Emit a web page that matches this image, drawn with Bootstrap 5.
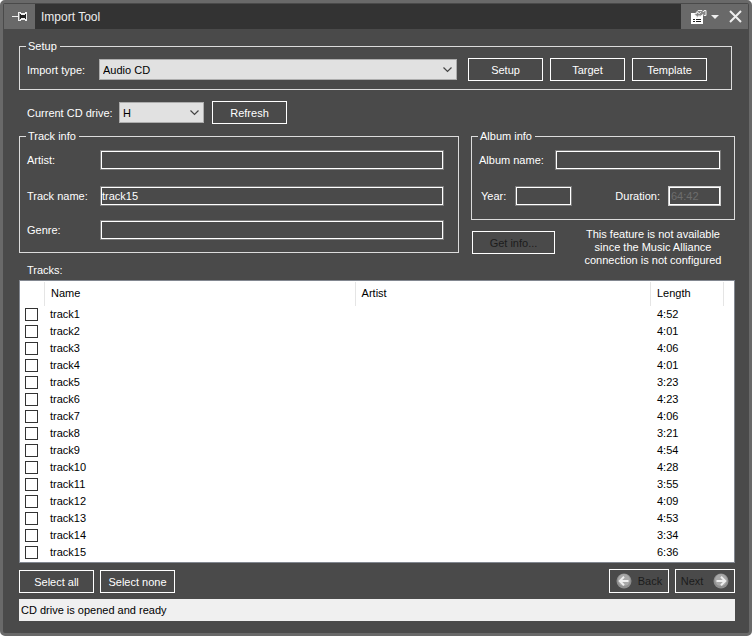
<!DOCTYPE html>
<html lang="en">
<head>
<meta charset="utf-8">
<meta name="viewport" content="width=device-width, initial-scale=1">
<title>Import Tool</title>
<link href="https://cdn.jsdelivr.net/npm/bootstrap@5.3.0/dist/css/bootstrap.min.css" rel="stylesheet">
<style>
  body { background: #fff; font-family: "Liberation Sans", Arial, sans-serif; font-size: 11px; line-height: 14px; }
  .tool-window { background: #4a4a4a; color: #fff; border: 3px solid #696969; border-radius: 5px; }
  .title-bar { height: 25px; margin: 1px 1px 0; background: #333; }
  .title-tools { background: #696969; width: 67px; padding: 0 6px 0 10px; }
  .title-bar button { border: 0; padding: 0; display: flex; justify-content: center; align-items: center; background: #696969; }
  .pin-button { width: 31px; }
  .title-bar h1 { font-size: 12px; line-height: 26px; padding-left: 6px; color: #eee; }
  .tool-body { padding: 11px 14px 12px 16px; }
  fieldset { border: 1px solid #dcdcdc; min-width: 0; }
  fieldset legend { float: none; width: auto; font-size: 11px; line-height: 13px; height: 13px; margin: 0 0 0 -1px; padding: 0 3px 0 2px; }
  .setup-group { margin-right: 3px; padding: 5px 24px 8px 7px; }
  .setup-label { width: 72px; }
  .button-row { gap: 7px; margin-left: 11px; }
  .tool-btn { --bs-btn-color: #fff; --bs-btn-border-color: #fff; --bs-btn-bg: #4a4a4a; --bs-btn-hover-color: #fff; --bs-btn-hover-bg: #5a5a5a; --bs-btn-hover-border-color: #fff;
    --bs-btn-disabled-color: #1c1c1c; --bs-btn-disabled-border-color: #fff; --bs-btn-disabled-bg: #4a4a4a; --bs-btn-disabled-opacity: 1;
    --bs-btn-border-radius: 0; --bs-btn-padding-x: 0; --bs-btn-padding-y: 0; --bs-btn-font-size: 11px; --bs-btn-line-height: 14px; width: 75px; height: 23px; }
  .tool-select { height: 21px; min-height: 0; padding: 0 20px 0 3px; font-size: 11px; line-height: 14px; color: #000; border: 1px solid #adadad; border-radius: 0;
    background-color: #e1e1e1; background-position: right 3px center; background-size: 11px 11px;
    background-image: url("data:image/svg+xml,%3csvg xmlns='http://www.w3.org/2000/svg' viewBox='0 0 11 11'%3e%3cpath fill='none' stroke='%23444' stroke-width='1.2' d='M1.5 3.5l4 4 4-4'/%3e%3c/svg%3e"); }
  .drive-row { margin-top: 11px; padding-left: 8px; }
  .drive-label { width: 92px; }
  .drive-select { width: 85px; }
  .groups { gap: 12px; margin-top: 6px; }
  .track-side { flex: 5 1 0; min-width: 0; }
  .album-side { flex: 3 1 0; min-width: 0; }
  .track-group { padding: 7px 14px 12px 7px; }
  .album-group { padding: 7px 13px 13px 7px; }
  .track-name-row { margin-bottom: 14px; }
  .tracks-caption { margin: 10px 0 0 8px; }
  .field-label { width: 73px; }
  .album-label { width: 76px; }
  .year-label { width: 36px; padding-left: 2px; }
  .tool-input { height: 20px; min-height: 0; padding: 0 1px; font-size: 11px; line-height: 14px; color: #fff; background: #4a4a4a; border: 1px solid #7a7a7a; border-radius: 0; outline: 1px solid #fff; outline-offset: -2px; }
  .tool-input:focus { color: #fff; background: #4a4a4a; border-color: #7a7a7a; box-shadow: none; outline: 1px solid #fff; }
  .tool-input:disabled { color: #6d6d6d; background: #4a4a4a; border-color: #ccc; }
  .year-input { width: 57px; }
  .duration-input { width: 53px; padding-left: 2px; }
  .info-btn { width: 83px; margin: 11px 0 0 1px; }
  .info-note { line-height: 13px; width: 148px; margin: 8px 8px 0 0; }
  .track-list { border: 1px solid #828790; background: #fff; margin-top: 3px; padding-bottom: 1px; }
  .track-table { table-layout: fixed; color: #000; --bs-table-bg: #fff; }
  .track-table > :not(caption) > * > * { padding: 0 6px; border: 0; line-height: 17px; height: 17px; overflow: hidden; }
  .track-table > thead > tr > th { height: 25px; line-height: 25px; font-weight: 400; background: linear-gradient(#e5e5e5, #e5e5e5) right 1px / 1px 24px no-repeat #fff; }
  .track-table > thead > tr > th:last-child { background: #fff; }
  .track-table > tbody > tr > td:first-child { padding-left: 5px; padding-right: 0; }
  .track-table > tbody > tr > td:nth-child(2) { padding-left: 5px; }
  .col-tick { width: 25px; }
  .col-name { width: 43.5%; }
  .col-length { width: 73px; }
  .col-rest { width: 10px; }
  .form-check-input.tool-check[type=checkbox] { display: block; width: 13px; height: 13px; margin: 2px 0; border: 1px solid #333; border-radius: 0; }
  .footer-row { margin-top: 6px; }
  .nav-btn { width: 60px; height: 24px; }
  .select-none-btn, .next-btn { margin-left: 6px; }
  .back-text { margin-left: 6px; }
  .next-text { margin-right: 10px; }
  .status-bar { background: #f0f0f0; color: #000; height: 22px; line-height: 23px; padding-left: 2px; margin-top: 6px; }
</style>
</head>
<body>
<main class="tool-window min-vh-100 d-flex flex-column">
  <header class="title-bar d-flex">
    <button type="button" class="pin-button" aria-label="Pin">
      <svg width="16" height="11" viewBox="0 0 16 11" shape-rendering="crispEdges"><path fill="#f0f0f0" d="M0 5h6v1H0zM6 1h3v9H6zM9 2h5v7H9zM13 1h2v9h-2z"/><path fill="#222" d="M8 3h1v5H8zM9 4h4v3H9zM13 3h1v5h-1z"/><path fill="#888" d="M7 2h1v7H7z"/></svg>
    </button>
    <h1 class="mb-0 fw-normal flex-grow-1">Import Tool</h1>
    <div class="title-tools d-flex align-items-center justify-content-between">
      <button type="button" aria-label="Options">
        <svg width="29" height="16" viewBox="0 0 29 16"><path fill="#fff" d="M0 4h12v11H0z"/><path stroke="#222" d="M2 10.500h2m1 0h5M2 12.500h2m1 0h5" shape-rendering="crispEdges"/><path fill="#888" stroke="#eee" d="M3.500 5.500L7 1.500h4l1 1h1v-1h2v5h-2l-1-1-3 2-1-1-2 2-1-2z"/><path stroke="#ddd" fill="none" d="M5 5l2-2 1 2 2-2"/><path fill="#eee" d="M20 6h8l-4 4z"/></svg>
      </button>
      <button type="button" aria-label="Close">
        <svg width="13" height="13" viewBox="0 0 13 13"><path stroke="#eee" stroke-width="2" d="M1 1l11 11M12 1L1 12"/></svg>
      </button>
    </div>
  </header>
  <div class="tool-body">
    <fieldset class="setup-group">
      <legend>Setup</legend>
      <div class="d-flex align-items-center">
        <label class="setup-label" for="importType">Import type:</label>
        <select class="form-select tool-select flex-fill w-auto" id="importType"><option>Audio CD</option></select>
        <div class="button-row d-flex">
          <button type="button" class="btn tool-btn">Setup</button>
          <button type="button" class="btn tool-btn">Target</button>
          <button type="button" class="btn tool-btn">Template</button>
        </div>
      </div>
    </fieldset>
    <div class="drive-row d-flex align-items-center">
      <label class="drive-label" for="cdDrive">Current CD drive:</label>
      <select class="form-select tool-select drive-select me-2" id="cdDrive"><option>H</option></select>
      <button type="button" class="btn tool-btn">Refresh</button>
    </div>
    <div class="groups d-flex align-items-start">
      <div class="track-side">
        <fieldset class="track-group">
          <legend>Track info</legend>
          <div class="d-flex align-items-center mb-3"><label class="field-label" for="artist">Artist:</label><input type="text" class="form-control tool-input flex-fill w-auto" id="artist"></div>
          <div class="track-name-row d-flex align-items-center"><label class="field-label" for="trackName">Track name:</label><input type="text" class="form-control tool-input flex-fill w-auto" id="trackName" value="track15"></div>
          <div class="d-flex align-items-center"><label class="field-label" for="genre">Genre:</label><input type="text" class="form-control tool-input flex-fill w-auto" id="genre"></div>
        </fieldset>
        <div class="tracks-caption" id="tracksCaption">Tracks:</div>
      </div>
      <div class="album-side">
        <fieldset class="album-group">
          <legend>Album info</legend>
          <div class="d-flex align-items-center mb-3"><label class="album-label" for="albumName">Album name:</label><input type="text" class="form-control tool-input flex-fill w-auto" id="albumName"></div>
          <div class="d-flex align-items-center"><label class="year-label" for="year">Year:</label><input type="text" class="form-control tool-input year-input" id="year"><label class="ms-auto me-2" for="duration">Duration:</label><input type="text" class="form-control tool-input duration-input" id="duration" value="64:42" disabled></div>
        </fieldset>
        <div class="d-flex justify-content-between align-items-start">
          <button type="button" class="btn tool-btn info-btn" disabled>Get info...</button>
          <p class="info-note text-center">This feature is not available since the Music Alliance connection is not configured</p>
        </div>
      </div>
    </div>
    <div class="track-list">
      <table class="table track-table mb-0" aria-labelledby="tracksCaption">
        <colgroup><col class="col-tick"><col class="col-name"><col class="col-artist"><col class="col-length"><col class="col-rest"></colgroup>
        <thead><tr><th></th><th>Name</th><th>Artist</th><th>Length</th><th></th></tr></thead>
        <tbody id="trackRows"></tbody>
      </table>
    </div>
    <div class="footer-row d-flex align-items-end">
      <button type="button" class="btn tool-btn">Select all</button>
      <button type="button" class="btn tool-btn select-none-btn">Select none</button>
      <button type="button" class="btn tool-btn nav-btn ms-auto d-flex align-items-center justify-content-center" disabled>
        <svg width="16" height="16" viewBox="0 0 16 16"><circle cx="8" cy="8" r="7.500" fill="#8f8f8f"/><circle cx="8" cy="7" r="6" fill="#a8a8a8"/><path d="M12.500 8H4M8 3.800L3.800 8 8 12.200" fill="none" stroke="#eee" stroke-width="2"/></svg><span class="back-text">Back</span>
      </button>
      <button type="button" class="btn tool-btn nav-btn next-btn d-flex align-items-center justify-content-center" disabled>
        <span class="next-text">Next</span><svg width="16" height="16" viewBox="0 0 16 16"><circle cx="8" cy="8" r="7.500" fill="#8f8f8f"/><circle cx="8" cy="7" r="6" fill="#a8a8a8"/><path d="M3.500 8H12M8 3.800L12.200 8 8 12.200" fill="none" stroke="#eee" stroke-width="2"/></svg>
      </button>
    </div>
    <div class="status-bar" role="status">CD drive is opened and ready</div>
  </div>
</main>
<script src="https://cdn.jsdelivr.net/npm/bootstrap@5.3.0/dist/js/bootstrap.bundle.min.js"></script>
<script>
  const lengths = ["4:52", "4:01", "4:06", "4:01", "3:23", "4:23", "4:06", "3:21", "4:54", "4:28", "3:55", "4:09", "4:53", "3:34", "6:36"];
  document.getElementById("trackRows").innerHTML = lengths.map((time, i) =>
    `<tr><td><input type="checkbox" class="form-check-input tool-check" id="pick${i + 1}"></td><td><label for="pick${i + 1}">track${i + 1}</label></td><td></td><td>${time}</td><td></td></tr>`).join("");
</script>
</body>
</html>
